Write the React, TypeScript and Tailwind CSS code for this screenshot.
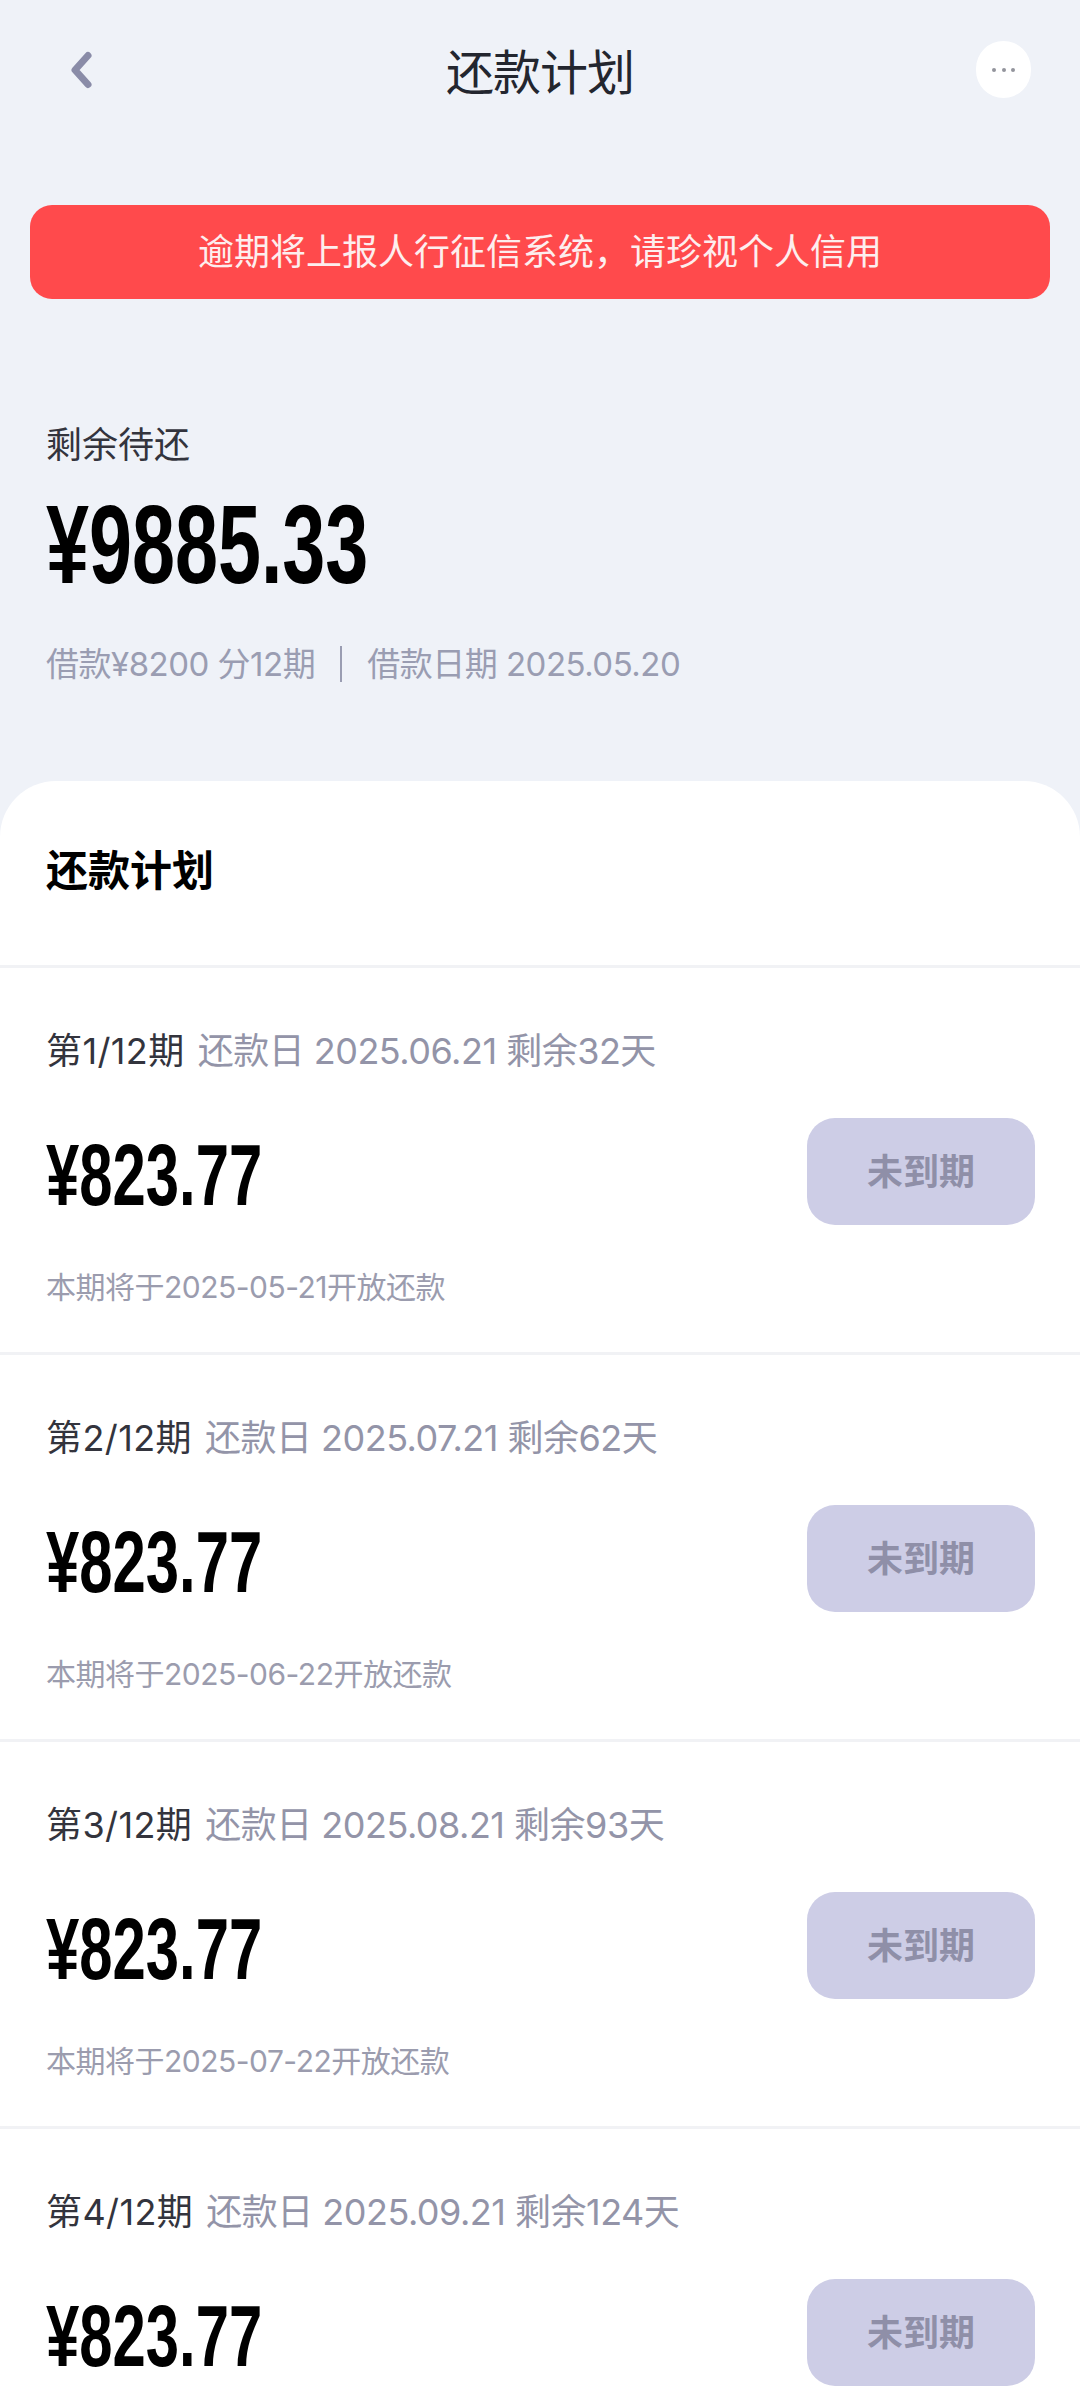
const bills = [
  { no: '第1/12期', due: '还款日 2025.06.21 剩余32天', open: '本期将于2025-05-21开放还款' },
  { no: '第2/12期', due: '还款日 2025.07.21 剩余62天', open: '本期将于2025-06-22开放还款' },
  { no: '第3/12期', due: '还款日 2025.08.21 剩余93天', open: '本期将于2025-07-22开放还款' },
  { no: '第4/12期', due: '还款日 2025.09.21 剩余124天', open: '' },
];

function BillRow({ no, due, open }: { no: string; due: string; open: string }) {
  return (
    <div className="h-[387px] border-t-[3px] border-[#f1f2f5] pl-[46px] pr-[45px] pt-[58px]">
      <div className="flex gap-[13px] text-[36px] leading-[50px]">
        <span className="tracking-[0.4px] text-[#33343d]">{no}</span>
        <span className="tracking-[-0.5px] text-[#9394a8]">{due}</span>
      </div>
      <div className="mt-[42px] flex h-[107px] items-center justify-between">
        <span className="origin-left translate-y-[3px] scale-x-[0.68] font-['Liberation_Sans'] text-[88px] leading-none font-bold text-black">
          ¥823.77
        </span>
        <button className="flex h-[107px] w-[228px] items-center justify-center rounded-[28px] bg-[#cdcde6] text-[36px] font-bold text-[#8f8fa8]">
          未到期
        </button>
      </div>
      <div className="mt-[40px] text-[30px] leading-[44px] tracking-[-0.5px] text-[#9b9cae]">{open}</div>
    </div>
  );
}

export default function App() {
  return (
    <div className="h-[2400px] w-[1080px] overflow-hidden bg-[#eff2f8] font-['Inter','Noto_Sans_CJK_SC',sans-serif]">
      <header className="relative flex h-[144px] items-center justify-center pt-[2px]">
        <svg className="absolute left-[66px] top-[48px]" width="30" height="44" viewBox="0 0 30 44" fill="none">
          <path d="M22 7.5 L9 22 L22 36.5" stroke="#8a8ca8" strokeWidth="7" strokeLinecap="round" strokeLinejoin="round" />
        </svg>
        <h1 className="text-[48px] leading-[60px] font-normal tracking-[-1px] text-[#23262f]">还款计划</h1>
        <div className="absolute left-[976px] top-[41px] flex h-[57px] w-[55px] items-center justify-center rounded-full bg-white">
          <div className="flex gap-[5.5px]">
            <span className="h-[4px] w-[4px] rounded-full bg-[#93949c]" />
            <span className="h-[4px] w-[4px] rounded-full bg-[#93949c]" />
            <span className="h-[4px] w-[4px] rounded-full bg-[#93949c]" />
          </div>
        </div>
      </header>

      <div className="mx-[30px] mt-[61px] flex h-[94px] items-center justify-center rounded-[22px] bg-[#ff4a4c] text-[36px] leading-none text-[#fdeeee]">
        逾期将上报人行征信系统，请珍视个人信用
      </div>

      <section className="pl-[46px] pt-[121px]">
        <div className="text-[36px] leading-[50px] text-[#33343d]">剩余待还</div>
        <div className="mt-[19px] origin-left scale-x-[0.69] font-['Liberation_Sans'] text-[112px] leading-[112px] font-bold text-black">
          ¥9885.33
        </div>
        <div className="mt-[40px] flex items-center text-[33px] leading-[46px] tracking-[-0.5px] text-[#9a9db2]">
          <span>借款¥8200 分12期</span>
          <span className="mx-[25px] h-[36px] w-[2px] bg-[#9a9db2]" />
          <span>借款日期 2025.05.20</span>
        </div>
      </section>

      <main className="mt-[94px] rounded-t-[56px] bg-white">
        <div className="flex h-[184px] items-center pb-[6px] pl-[46px] text-[42px] font-bold text-black">还款计划</div>
        {bills.map((bill) => (
          <BillRow key={bill.no} {...bill} />
        ))}
      </main>
    </div>
  );
}
